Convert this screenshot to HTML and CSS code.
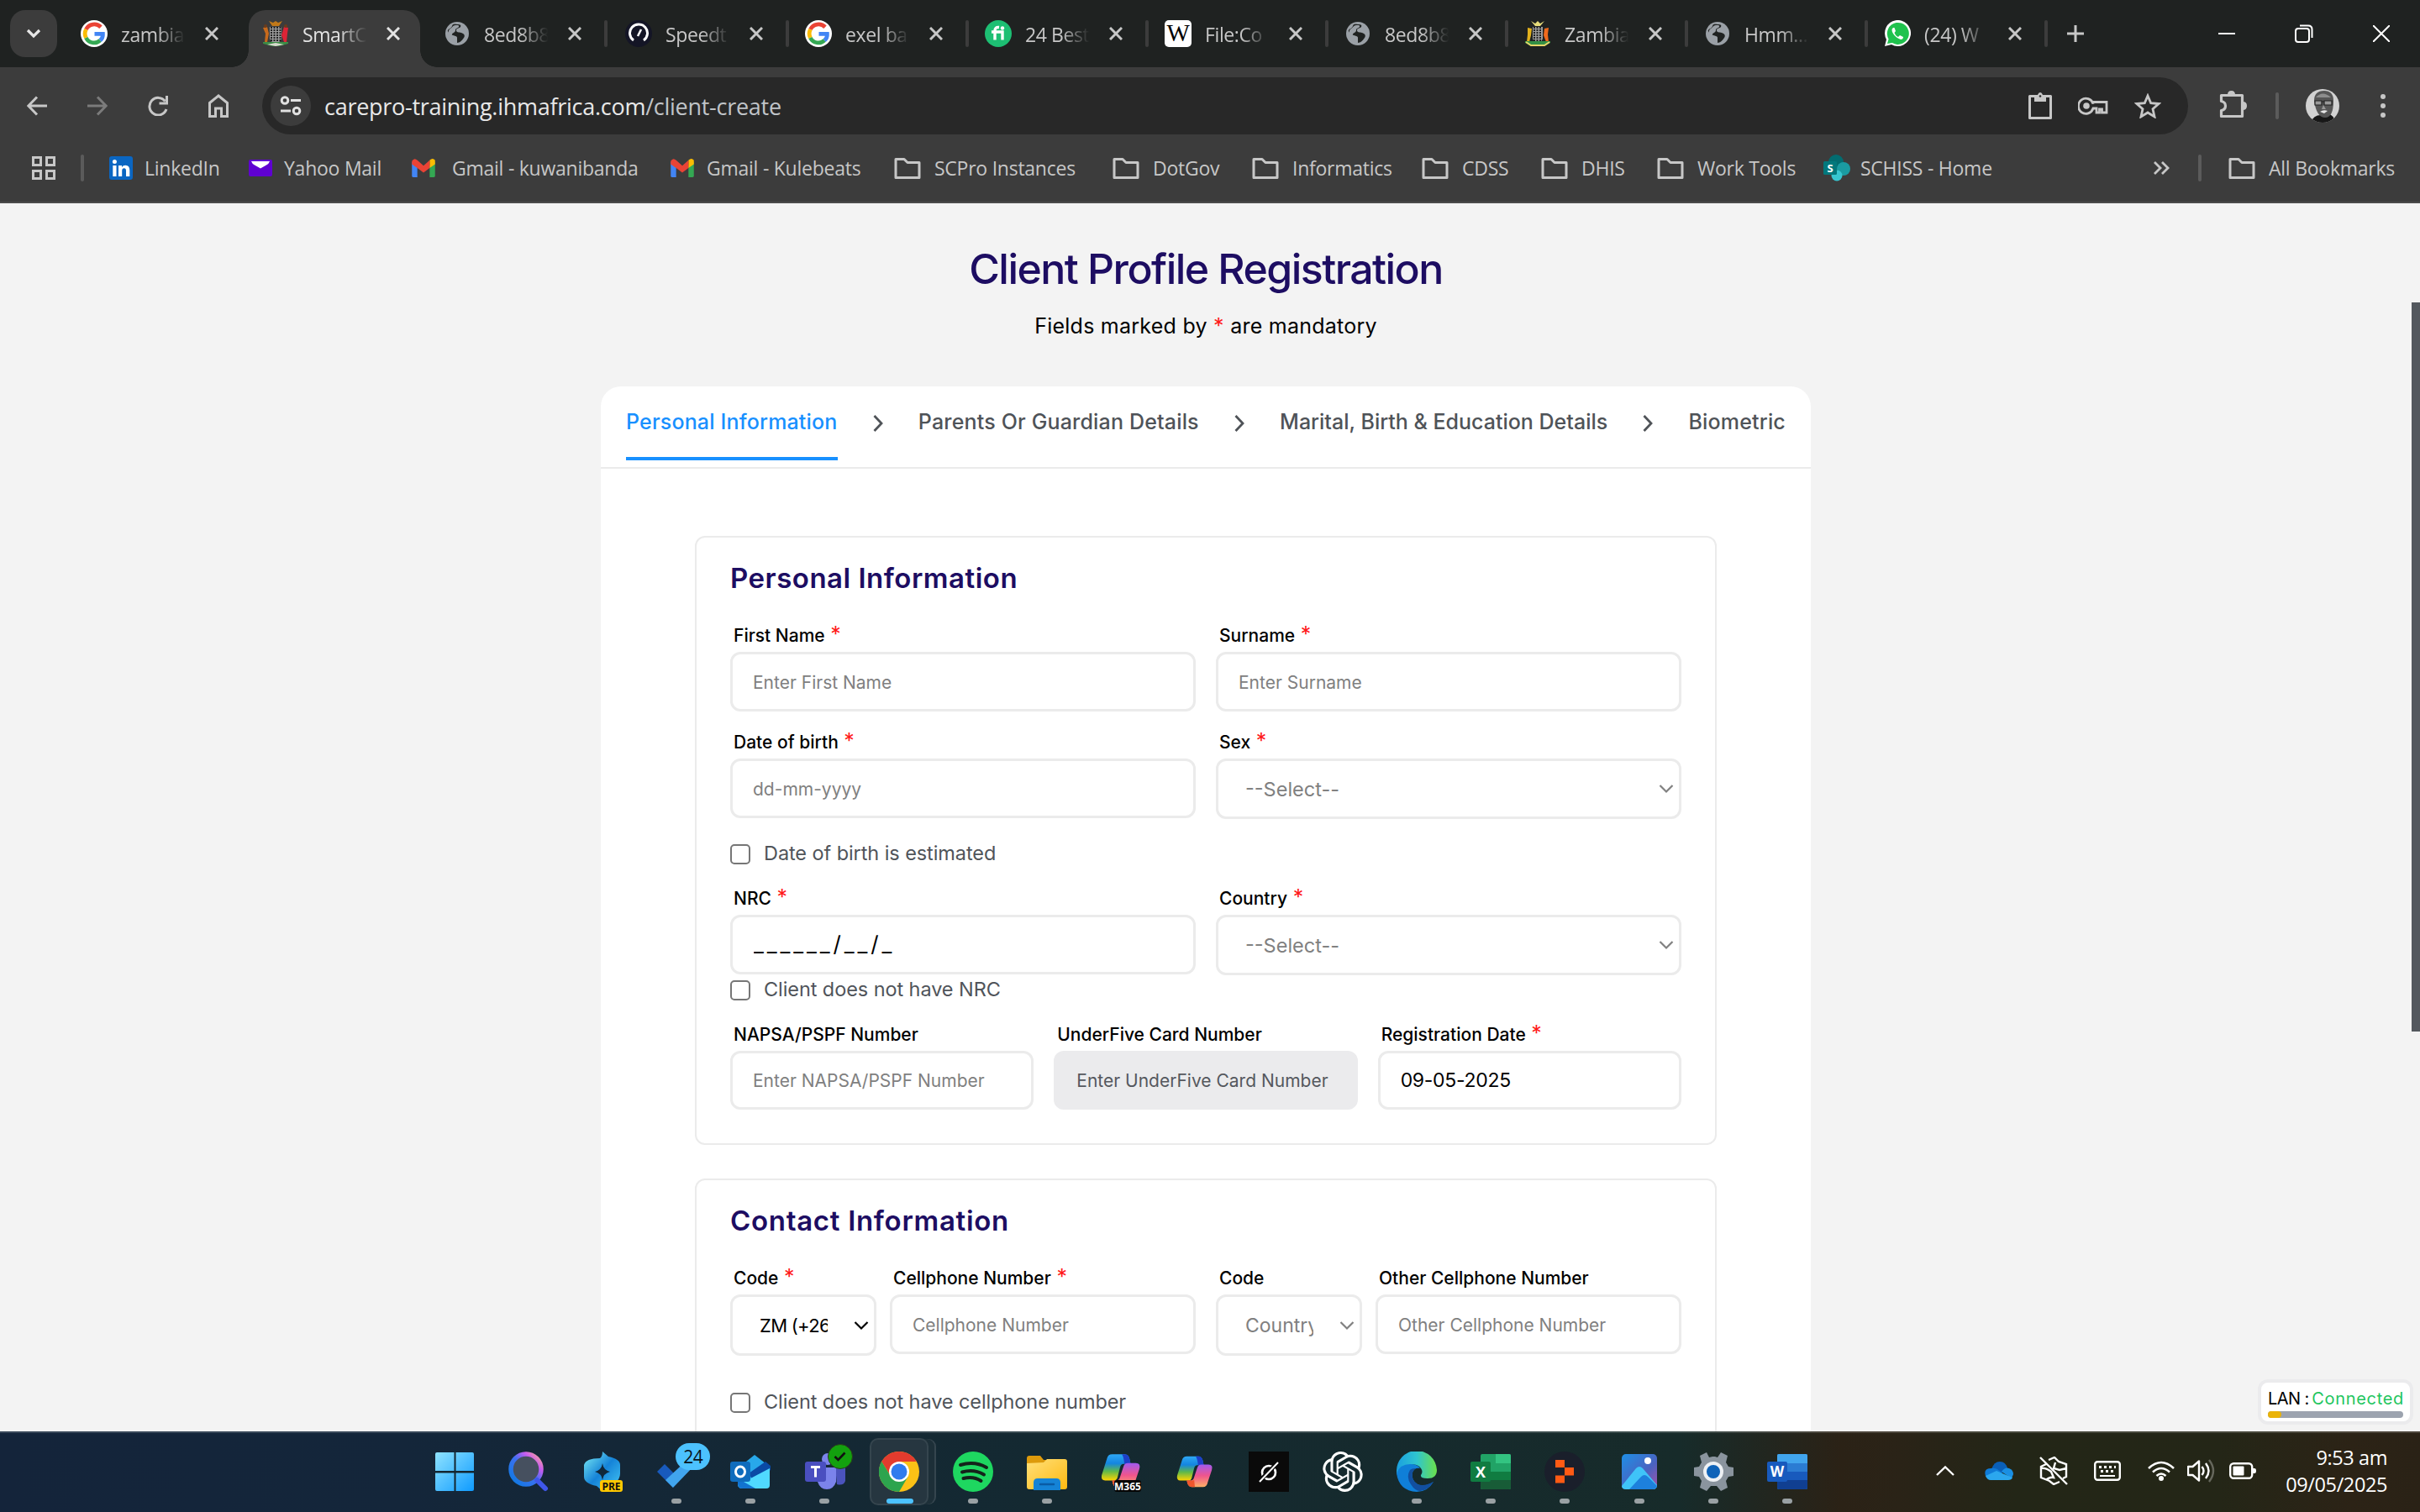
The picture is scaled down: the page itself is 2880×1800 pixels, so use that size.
FILE: index.html
```html
<!DOCTYPE html>
<html lang="en">
<head>
<meta charset="utf-8">
<title>SmartCare - Client Profile Registration</title>
<link rel="stylesheet" href="styles.css">
</head>
<body>
<svg class="defs" aria-hidden="true">
  <defs>
    <linearGradient id="gWin" x1="0" y1="0" x2="1" y2="1"><stop offset="0" stop-color="#8fe3ff"/><stop offset="1" stop-color="#0f9bff"/></linearGradient>
    <linearGradient id="gSearch" x1="0" y1="1" x2="1" y2="0"><stop offset="0" stop-color="#0a7be0"/><stop offset=".5" stop-color="#3d6ff0"/><stop offset=".75" stop-color="#c95cf0"/><stop offset="1" stop-color="#ffb08a"/></linearGradient>
    <linearGradient id="gPre" x1="0" y1="0" x2="1" y2="1"><stop offset="0" stop-color="#7ff0f5"/><stop offset=".5" stop-color="#1583d8"/><stop offset="1" stop-color="#45c8f5"/></linearGradient>
    <linearGradient id="gCopA" x1="0" y1="0" x2="0" y2="1"><stop offset="0" stop-color="#2ea8f5"/><stop offset=".35" stop-color="#1485e0"/><stop offset=".65" stop-color="#5fb84a"/><stop offset="1" stop-color="#ffd400"/></linearGradient>
    <linearGradient id="gCopB" x1="0" y1="0" x2="0" y2="1"><stop offset="0" stop-color="#a05af0"/><stop offset=".5" stop-color="#f0558c"/><stop offset="1" stop-color="#ffb066"/></linearGradient>
    <linearGradient id="gEdge" x1="0" y1="0" x2="1" y2="0"><stop offset="0" stop-color="#1a9fe0"/><stop offset=".5" stop-color="#2fc5cf"/><stop offset="1" stop-color="#6be04a"/></linearGradient>
    <linearGradient id="gPhoto" x1="0" y1="0" x2="1" y2="1"><stop offset="0" stop-color="#1e8fe6"/><stop offset=".6" stop-color="#4b62c0"/><stop offset="1" stop-color="#a552a8"/></linearGradient>
    <linearGradient id="gFold" x1="0" y1="0" x2="1" y2="1"><stop offset="0" stop-color="#ffe07a"/><stop offset="1" stop-color="#ffb911"/></linearGradient>

    <symbol id="close" viewBox="0 0 16 16"><path d="M1 1l14 14M15 1L1 15" fill="none" stroke="currentColor" stroke-width="3"/></symbol>
    <symbol id="google" viewBox="0 0 32 32"><circle cx="16" cy="16" r="16" fill="#fff"/><g fill="none" stroke-width="4.8"><path d="M24 8.2A11 11 0 0 0 6.4 11" stroke="#ea4335"/><path d="M6.4 11a11 11 0 0 0 0 10" stroke="#fbbc05"/><path d="M6.4 21a10.6 10.6 0 0 0 16.8 3" stroke="#34a853"/><path d="M23.2 24.2c2.4-2 3.4-4.6 3.2-7.8H16.5" stroke="#4285f4"/></g></symbol>
    <symbol id="arms" viewBox="0 0 32 32"><path d="M8 1l5 2 3-2 3 2 5-2-4 6h-8z" fill="#c07818"/><path d="M9 8h14v14q-2 5-7 6-5-1-7-6z" fill="#9a9a9a"/><path d="M11 8v18M14.500 8v20M18 8v20M21.500 8v17" stroke="#222" stroke-width="2" stroke-dasharray="2 1"/><path d="M1 9l5-1 2 8-2 10H3l1-10z" fill="#c76a1c"/><path d="M31 9l-5-1-3 10 3 8h3l1-10z" fill="#dc2436"/><circle cx="4" cy="7" r="2" fill="#6b3b1c"/><circle cx="28" cy="7" r="2" fill="#6b3b1c"/><path d="M1 26h30v2L20 31h-8L1 28z" fill="#3d8c46"/><path d="M6 29l10-2 10 2-10 2z" fill="#d7d9cc"/></symbol>
    <symbol id="arms2" viewBox="0 0 32 32"><path d="M8 1l5 3 3-3 3 3 5-3-5 6h-6z" fill="#e6dc7a"/><path d="M10 8h12v14q-2 5-6 6-4-1-6-6z" fill="#9a9a9a"/><path d="M12 8v18M15.500 8v20M19 8v20" stroke="#222" stroke-width="2" stroke-dasharray="2 1"/><path d="M4 9l5 1-1 8-2 8H3l1-9z" fill="#e2b11c"/><path d="M29 9l-5 1-1 8 3 8h3l-1-9z" fill="#f06a1c"/><path d="M1 25h30v2l-7 4H8l-7-4z" fill="#339045"/><path d="M2 26l6 4h16l6-4" fill="none" stroke="#e6d66a" stroke-width="2"/></symbol>
    <symbol id="globe" viewBox="0 0 32 32"><circle cx="16" cy="16" r="14" fill="#9aa0a6"/><path d="M16 5c4 0 5 1 4 3s-5 1-5 4 3 2 6 3 5 3 3 6-5 6-8 6v-6c0-3-5-2-7-4S4 14 5 12s4-2 5-5 3-2 6-2z" fill="#1f2221"/><path d="M14 6c3 0 5 0 4 2s-4 1-4 4-4 3-4 5-3 0-4-1 0-5 2-6 3-4 6-4z" fill="#9aa0a6"/></symbol>
    <symbol id="speed" viewBox="0 0 32 32"><circle cx="16" cy="16" r="16" fill="#141526"/><path d="M10 24a10.500 10.500 0 1 1 12 0" fill="none" stroke="#fff" stroke-width="3"/><path d="M15 19l4-8" stroke="#fff" stroke-width="2.500"/></symbol>
    <symbol id="fiverr" viewBox="0 0 32 32"><circle cx="16" cy="16" r="16" fill="#1dbf73"/><path d="M8 14h13v9.500M12 23.500V12.500q0-4.500 5-4" fill="none" stroke="#fff" stroke-width="3.400"/><circle cx="21" cy="9.500" r="2.200" fill="#fff"/></symbol>
    <symbol id="wiki" viewBox="0 0 32 32"><rect width="32" height="32" rx="5" fill="#fff"/><text x="16" y="25" class="i-serif" text-anchor="middle" font-size="29">W</text></symbol>
    <symbol id="whats" viewBox="0 0 32 32"><path d="M1 31l2-8A15.500 15.500 0 1 1 9 29z" fill="#fff"/><path d="M4 28l1.600-5.500A13 13 0 1 1 10 27z" fill="#1fc24d"/><path d="M11 9q-3 2 0 7t9 7q3 0 3-3l-4-2-2 2q-3-1-4.500-5l1.500-2-1.500-4z" fill="#fff"/></symbol>
    <symbol id="folder" viewBox="0 0 32 28"><path d="M2 3.500h10l4 4h14v18H2z" fill="none" stroke="#c7c7c7" stroke-width="3" stroke-linejoin="round"/></symbol>
    <symbol id="gmail" viewBox="0 0 30 24"><path d="M0 4v18q0 2 2 2h5V9z" fill="#4285f4"/><path d="M30 4v18q0 2-2 2h-5V9z" fill="#34a853"/><path d="M23 2q4-4 7 0v5l-7 5z" fill="#fbbc04"/><path d="M0 3q3-5 7-1l8 7 8-7v10l-8 6-8-6-7-5z" fill="#ea4335"/></symbol>
    <symbol id="chev" viewBox="0 0 12 22"><path d="M1.500 2l8.500 9-8.500 9" fill="none" stroke="#4f5358" stroke-width="2.800"/></symbol>
    <symbol id="down" viewBox="0 0 18 12"><path d="M1.500 2l7.500 7.500L16.500 2" fill="none" stroke="currentColor" stroke-width="2.200"/></symbol>
    <symbol id="copilot" viewBox="0 0 48 48"><path d="M14 5h14q5 0 6 6l1 5h-8q-3 0-4 4l-3 12q-1 3-4 3H6q-5 0-4-6L8 10q1-5 6-5z" fill="url(#gCopA)"/><path d="M25 5h4q4 0 5 6l1 5h-7q-1-9-3-11z" fill="#1d3fc8"/><path d="M34 43H20q-5 0-6-8h5q3 0 4-4l4-12q1-4 5-4h9q6 0 4 7l-5 15q-1 6-6 6z" fill="url(#gCopB)"/><path d="M14 35h7q2 0 2-2l1 10h-4q-5 0-6-8z" fill="#f0562c"/></symbol>
  </defs>
</svg>

<div class="screen">
  <header class="browser">
    <div class="tabstrip">
      <div class="tabsearch"><svg width="18" height="12" viewBox="0 0 18 12"><path d="M2 2l7 7 7-7" fill="none" stroke="#e6e6e6" stroke-width="3.200"/></svg></div>
      <div class="tab wide"><svg class="fav"><use href="#google"/></svg><span class="tt">zambia</span><svg class="x"><use href="#close"/></svg></div>
      <div class="tab wide active"><svg class="fav"><use href="#arms"/></svg><span class="tt">SmartC</span><svg class="x"><use href="#close"/></svg></div>
      <div class="tab wide"><svg class="fav"><use href="#globe"/></svg><span class="tt">8ed8b8</span><svg class="x"><use href="#close"/></svg><i></i></div>
      <div class="tab"><svg class="fav"><use href="#speed"/></svg><span class="tt">Speedt</span><svg class="x"><use href="#close"/></svg><i></i></div>
      <div class="tab"><svg class="fav"><use href="#google"/></svg><span class="tt">exel ba</span><svg class="x"><use href="#close"/></svg><i></i></div>
      <div class="tab"><svg class="fav"><use href="#fiverr"/></svg><span class="tt">24 Best</span><svg class="x"><use href="#close"/></svg><i></i></div>
      <div class="tab"><svg class="fav"><use href="#wiki"/></svg><span class="tt">File:Co</span><svg class="x"><use href="#close"/></svg><i></i></div>
      <div class="tab"><svg class="fav"><use href="#globe"/></svg><span class="tt">8ed8b8</span><svg class="x"><use href="#close"/></svg><i></i></div>
      <div class="tab"><svg class="fav"><use href="#arms2"/></svg><span class="tt">Zambia</span><svg class="x"><use href="#close"/></svg><i></i></div>
      <div class="tab"><svg class="fav"><use href="#globe"/></svg><span class="tt">Hmm...</span><svg class="x"><use href="#close"/></svg><i></i></div>
      <div class="tab"><svg class="fav"><use href="#whats"/></svg><span class="tt">(24) W</span><svg class="x"><use href="#close"/></svg><i></i></div>
      <svg class="plus" width="22" height="22" viewBox="0 0 22 22"><path d="M11 1v20M1 11h20" stroke="#c7c7c7" stroke-width="3"/></svg>
      <div class="wincontrols">
        <svg width="20" height="20" viewBox="0 0 20 20"><path d="M0 10h20" stroke="#fff" stroke-width="2"/></svg>
        <svg width="22" height="22" viewBox="0 0 22 22"><rect x="1" y="5" width="16" height="16" rx="3" fill="none" stroke="#fff" stroke-width="2"/><path d="M6 1.500h10q4.500 0 4.500 4.500v10" fill="none" stroke="#fff" stroke-width="2"/></svg>
        <svg width="20" height="20" viewBox="0 0 20 20"><path d="M0 0l20 20M20 0L0 20" stroke="#fff" stroke-width="2"/></svg>
      </div>
    </div>

    <div class="toolbar">
      <div class="nav">
        <svg viewBox="0 0 24 24"><path d="M24 12H2M12 1.500L1.800 12 12 22.500" fill="none" stroke="#c7c7c7" stroke-width="3"/></svg>
        <svg viewBox="0 0 24 24"><path d="M0 12h22M12 1.500L22.200 12 12 22.500" fill="none" stroke="#7b7b7b" stroke-width="3"/></svg>
        <svg viewBox="0 0 24 24"><path d="M22 16a10.300 10.300 0 1 1-1.500-9.500M22.500 0v9h-9" fill="none" stroke="#c7c7c7" stroke-width="3"/></svg>
        <svg viewBox="0 0 24 28"><path d="M1.500 10.500L12 2l10.500 8.500v16h-7V17h-7v9.500h-7z" fill="none" stroke="#c7c7c7" stroke-width="3"/></svg>
      </div>
      <div class="omnibox">
        <span class="siteinfo"><svg width="26" height="24" viewBox="0 0 26 24"><g fill="none" stroke="#e0e0e0" stroke-width="3"><circle cx="6" cy="5.500" r="3.800"/><path d="M13 5.500h12M1 18h12"/><circle cx="20" cy="18" r="3.800"/></g></svg></span>
        <span class="url">carepro-training.ihmafrica.com<em>/client-create</em></span>
        <span class="omniicons">
          <svg width="28" height="32" viewBox="0 0 28 32"><path d="M1.500 4.500h25v26h-25z" fill="none" stroke="#c7c7c7" stroke-width="3" stroke-linejoin="round"/><path d="M7 3h4q1-3 3-3t3 3h4v8H7z" fill="#c7c7c7"/><circle cx="14" cy="4.500" r="1.300" fill="#282828"/></svg>
          <svg width="36" height="22" viewBox="0 0 36 22"><path d="M18 8.500A9 9 0 1 0 18 14h4v5h3.500v-4h3v4H34V6.500H18z" fill="none" stroke="#c7c7c7" stroke-width="2.800"/><circle cx="10" cy="11" r="3.800" fill="#c7c7c7"/></svg>
          <svg width="32" height="30" viewBox="0 0 32 30"><path d="M16 3l3.700 8.700 9.300.8-7 6.200 2 9.200-8-4.900-8 4.900 2-9.200-7-6.200 9.300-.8z" fill="none" stroke="#c7c7c7" stroke-width="2.800"/></svg>
        </span>
      </div>
      <svg class="puzzle" width="34" height="34" viewBox="0 0 34 34"><path d="M2.500 6.500h25v25h-25v-7q5-1 5-5.500t-5-5.500z" fill="none" stroke="#c7c7c7" stroke-width="3.200" stroke-linejoin="round"/><path d="M10 6q0-5 4.500-5T19 6zM28 14q5 0 5 5t-5 5z" fill="#c7c7c7"/></svg>
      <i class="vsep"></i>
      <svg class="avatar" width="40" height="40" viewBox="0 0 40 40"><clipPath id="av"><circle cx="20" cy="20" r="20"/></clipPath><g clip-path="url(#av)"><rect width="40" height="40" fill="#d2d2d2"/><path d="M6 40q3-9 12-9l8-2q8 2 9 11z" fill="#171717"/><path d="M10 14q0-12 12-12 11 0 11 12 0 20-10 20-10 0-13-20z" fill="#565656"/><path d="M12 10q8-9 18 0" fill="#8d8d8d"/><path d="M11 14h8v5h-8zM22 14h9v5h-9zM19 15h3" fill="#999" stroke="#222" stroke-width="1.200"/><path d="M21 19l-2 5h5z" fill="#999"/><path d="M17 27q4-3 9-1l-4 3z" fill="#e8e8e8"/></g></svg>
      <svg class="kebab" width="8" height="28" viewBox="0 0 8 28" fill="#c7c7c7"><circle cx="4" cy="3" r="3"/><circle cx="4" cy="14" r="3"/><circle cx="4" cy="25" r="3"/></svg>
    </div>

    <div class="bookmarks">
      <svg width="28" height="28" viewBox="0 0 28 28"><g fill="none" stroke="#c7c7c7" stroke-width="3"><path d="M1.500 1.500h9v9h-9zM17.500 1.500h9v9h-9zM1.500 17.500h9v9h-9zM17.500 17.500h9v9h-9z"/></g></svg>
      <i class="vsep"></i>
      <a class="bm site"><svg width="28" height="28" viewBox="0 0 28 28"><rect width="28" height="28" rx="3" fill="#0a66c2"/><path d="M4.300 11h4.200v13H4.300zM11 11h4v2q1.400-2.300 4.300-2.300 5 0 5 6V24H20v-6.500q0-3.200-2.300-3.200-2.500 0-2.500 3.200V24H11z" fill="#fff"/><circle cx="6.400" cy="6.500" r="2.500" fill="#fff"/></svg>LinkedIn</a>
      <a class="bm site"><svg width="28" height="20" viewBox="0 0 28 20"><rect width="28" height="20" rx="2" fill="#5f01d1"/><path d="M3 2h22q-1 3-4 4.500l-7 4-7-4Q4 5 3 2z" fill="#fff"/></svg>Yahoo Mail</a>
      <a class="bm mail"><svg width="30" height="22"><use href="#gmail"/></svg>Gmail - kuwanibanda</a>
      <a class="bm site"><svg width="30" height="22"><use href="#gmail"/></svg>Gmail - Kulebeats</a>
      <a class="bm"><svg width="32" height="28"><use href="#folder"/></svg>SCPro Instances</a>
      <a class="bm"><svg width="32" height="28"><use href="#folder"/></svg>DotGov</a>
      <a class="bm"><svg width="32" height="28"><use href="#folder"/></svg>Informatics</a>
      <a class="bm"><svg width="32" height="28"><use href="#folder"/></svg>CDSS</a>
      <a class="bm"><svg width="32" height="28"><use href="#folder"/></svg>DHIS</a>
      <a class="bm"><svg width="32" height="28"><use href="#folder"/></svg>Work Tools</a>
      <a class="bm share"><svg width="32" height="32" viewBox="0 0 32 32"><circle cx="15" cy="9" r="9" fill="#036c70"/><circle cx="24" cy="17" r="8" fill="#1a9ba1"/><circle cx="16" cy="25" r="6.500" fill="#37c6d0"/><rect y="8" width="16" height="16" rx="1.500" fill="#03787c"/><text x="8" y="21" text-anchor="middle" font-size="13" font-weight="700" fill="#fff">S</text></svg>SCHISS - Home</a>
      <svg width="20" height="16" viewBox="0 0 20 16"><path d="M2 1l7 7-7 7M11 1l7 7-7 7" fill="none" stroke="#c7c7c7" stroke-width="2.800"/></svg>
      <i class="vsep"></i>
      <a class="bm"><svg width="32" height="28"><use href="#folder"/></svg>All Bookmarks</a>
    </div>
  </header>

  <main class="page">
    <div class="content">
      <h1>Client Profile Registration</h1>
      <p class="sub">Fields marked by <b>*</b> are mandatory</p>
      <section class="card">
        <nav class="steps">
          <a class="current">Personal Information</a><svg width="12" height="22"><use href="#chev"/></svg>
          <a>Parents Or Guardian Details</a><svg width="12" height="22"><use href="#chev"/></svg>
          <a class="long">Marital, Birth &amp; Education Details</a><svg width="12" height="22"><use href="#chev"/></svg>
          <a>Biometric</a>
        </nav>

        <div class="panel">
          <h2>Personal Information</h2>
          <div class="row r1">
            <div><label>First Name <b>*</b></label><input placeholder="Enter First Name"></div>
            <div><label>Surname <b>*</b></label><input placeholder="Enter Surname"></div>
          </div>
          <div class="row r2">
            <div><label>Date of birth <b>*</b></label><input placeholder="dd-mm-yyyy"></div>
            <div><label>Sex <b>*</b></label><div class="select"><span>--Select--</span><svg width="18" height="12"><use href="#down"/></svg></div></div>
          </div>
          <div class="check"><input type="checkbox"><span>Date of birth is estimated</span></div>
          <div class="row r3">
            <div><label>NRC <b>*</b></label><input class="nrc" value="______/__/_"></div>
            <div><label>Country <b>*</b></label><div class="select"><span>--Select--</span><svg width="18" height="12"><use href="#down"/></svg></div></div>
          </div>
          <div class="check"><input type="checkbox"><span>Client does not have NRC</span></div>
          <div class="row three">
            <div><label>NAPSA/PSPF Number</label><input placeholder="Enter NAPSA/PSPF Number"></div>
            <div><label>UnderFive Card Number</label><input class="off" placeholder="Enter UnderFive Card Number" disabled></div>
            <div><label>Registration Date <b>*</b></label><input class="date" value="09-05-2025"></div>
          </div>
        </div>

        <div class="panel second">
          <h2>Contact Information</h2>
          <div class="row phones">
            <div><label>Code <b>*</b></label><div class="select dark"><span>ZM (+26</span><svg width="18" height="12"><use href="#down"/></svg></div></div>
            <div><label>Cellphone Number <b>*</b></label><input placeholder="Cellphone Number"></div>
            <div><label>Code</label><div class="select"><span>Country</span><svg width="18" height="12"><use href="#down"/></svg></div></div>
            <div><label>Other Cellphone Number</label><input placeholder="Other Cellphone Number"></div>
          </div>
          <div class="check"><input type="checkbox"><span>Client does not have cellphone number</span></div>
        </div>
      </section>
    </div>
    <div class="scroll"><i></i></div>
    <div class="lan"><p>LAN : <span>Connected</span></p><div class="meter"><i></i></div></div>
  </main>

  <footer class="taskbar">
    <div class="apps">
      <div class="app"><svg viewBox="0 0 48 48"><path d="M3 1h21v22H1V3q0-2 2-2zM25 1h20q2 0 2 2v20H25zM1 25h23v22H3q-2 0-2-2zM25 25h22v20q0 2-2 2H25z" fill="url(#gWin)"/><path d="M24.500 0v48M0 24.500h48" stroke="#14262f" stroke-width="2"/></svg></div>
      <div class="app"><svg viewBox="0 0 48 48"><circle cx="21" cy="21" r="18" fill="#46505f" stroke="url(#gSearch)" stroke-width="5.500"/><path d="M34 34l10 10" stroke="#3f57ea" stroke-width="6" stroke-linecap="round"/></svg></div>
      <div class="app"><svg viewBox="0 0 48 48"><path d="M24 0l7 6q14 3 14 10v10q0 12-21 21l-7-6Q2 38 2 30V16Q4 8 21 8q3-2 3-8z" fill="url(#gPre)"/><path d="M24 14q1 8 9 10-8 2-9 10-1-8-9-10 8-2 9-10z" fill="#10283a"/><rect x="21" y="34" width="27" height="14" rx="3" fill="#ffc800"/><text x="34.500" y="45.500" text-anchor="middle" font-size="12" font-weight="700" fill="#111">PRE</text></svg></div>
      <div class="app run"><svg viewBox="0 0 48 48"><path d="M1 24l9-9 11 11-1 17z" fill="#185abd"/><path d="M11 34l28-26 6 9-25 26z" fill="#41a5ee"/></svg><span class="badge blue">24</span><i></i></div>
      <div class="app run"><svg viewBox="0 0 48 48"><path d="M9 20L29 4l18 14v8L13 40H9z" fill="#28a8ea"/><path d="M22 26L42 12l6 5v5L28 36z" fill="#0a4aa5"/><path d="M47 20v20q0 4-4 4H14q-4 0-5-4z" fill="#50d9ff"/><path d="M9 32l21 12H14q-5 0-5-6z" fill="#1273d0"/><rect y="12" width="24" height="24" rx="3" fill="#0f6cbd"/><ellipse cx="12" cy="24" rx="5.500" ry="6" fill="none" stroke="#fff" stroke-width="3"/></svg><i></i></div>
      <div class="app run"><svg viewBox="0 0 48 48"><circle cx="27" cy="9" r="7" fill="#7b83eb"/><path d="M36 19h12v16q-2 6-10 4z" fill="#4b53bc"/><path d="M15 19h22v17q-3 9-11 9t-11-9z" fill="#7b83eb"/><rect y="12" width="25" height="24" rx="3" fill="#4a4fc0"/><path d="M7 18.500h11M12.500 18.500v12" stroke="#fff" stroke-width="3"/></svg><span class="badge green"><svg width="16" height="12" viewBox="0 0 16 12"><path d="M1.500 6l4 4 8-8.500" fill="none" stroke="#111" stroke-width="2.600"/></svg></span><i></i></div>
      <div class="app run front"><span class="stack"><svg viewBox="0 0 48 48"><circle cx="24" cy="24" r="24" fill="#fbc116"/><path d="M3.200 12A24 24 0 0 1 44.800 12H24L14 29z" fill="#e33b2e"/><path d="M3.200 12A24 24 0 0 0 24 48l10.500-18-20 0z" fill="#2da44e"/><circle cx="24" cy="24" r="12" fill="#fff"/><circle cx="24" cy="24" r="9.500" fill="#2f7bee"/></svg></span><i></i></div>
      <div class="app run"><svg viewBox="0 0 48 48"><circle cx="24" cy="24" r="24" fill="#1ed760"/><path d="M9 16q17-5 31 3M11 24.500q14-4 26 3M12.500 32q12-3 21 3" fill="none" stroke="#14231a" stroke-width="4" stroke-linecap="round"/></svg><i></i></div>
      <div class="app run"><svg viewBox="0 0 48 48"><path d="M0 8q0-3 3-3h13l4 5h25v10H0z" fill="#dd9a0c"/><path d="M0 14l20-1 4-4h21q3 0 3 3v30q0 3-3 3H3q-3 0-3-3z" fill="url(#gFold)"/><path d="M8 46V37q0-5 5-5h22q5 0 5 5v9z" fill="#1583d6"/><path d="M16 39h16" stroke="#0a5ba5" stroke-width="2.500" stroke-linecap="round"/></svg><i></i></div>
      <div class="app"><svg viewBox="0 0 48 48"><use href="#copilot" x="-1" y="-2" width="50" height="50"/><rect x="16" y="34" width="32" height="14" rx="3" fill="#050505"/><text x="32" y="45.500" text-anchor="middle" font-size="12" font-weight="700" fill="#fff">M365</text></svg></div>
      <div class="app"><svg viewBox="0 0 48 48"><use href="#copilot" x="1" y="1" width="46" height="46"/></svg></div>
      <div class="app"><svg viewBox="0 0 48 48"><rect width="48" height="48" fill="#0a0a0a"/><circle cx="24" cy="25" r="8" fill="none" stroke="#fff" stroke-width="2.600"/><path d="M13 35L35 13" stroke="#0a0a0a" stroke-width="5"/><path d="M13 36L35 13" stroke="#fff" stroke-width="2"/></svg></div>
      <div class="app"><svg viewBox="0 0 24 24"><path fill="#fff" d="M22.2819 9.8211a5.9847 5.9847 0 0 0-.5157-4.9108 6.0462 6.0462 0 0 0-6.5098-2.9A6.0651 6.0651 0 0 0 4.9807 4.1818a5.9847 5.9847 0 0 0-3.9977 2.9 6.0462 6.0462 0 0 0 .7427 7.0966 5.98 5.98 0 0 0 .511 4.9107 6.051 6.051 0 0 0 6.5146 2.9001A5.9847 5.9847 0 0 0 13.2599 24a6.0557 6.0557 0 0 0 5.7718-4.2058 5.9894 5.9894 0 0 0 3.9977-2.9001 6.0557 6.0557 0 0 0-.7475-7.0729zm-9.022 12.6081a4.4755 4.4755 0 0 1-2.8764-1.0408l.1419-.0804 4.7783-2.7582a.7948.7948 0 0 0 .3927-.6813v-6.7369l2.02 1.1686a.071.071 0 0 1 .038.052v5.5826a4.504 4.504 0 0 1-4.4945 4.4944zm-9.6607-4.1254a4.4708 4.4708 0 0 1-.5346-3.0137l.142.0852 4.783 2.7582a.7712.7712 0 0 0 .7806 0l5.8428-3.3685v2.3324a.0804.0804 0 0 1-.0332.0615L9.74 19.9502a4.4992 4.4992 0 0 1-6.1408-1.6464zM2.3408 7.8956a4.485 4.485 0 0 1 2.3655-1.9728V11.6a.7664.7664 0 0 0 .3879.6765l5.8144 3.3543-2.0201 1.1685a.0757.0757 0 0 1-.071 0l-4.8303-2.7865A4.504 4.504 0 0 1 2.3408 7.872zm16.5963 3.8558L13.1038 8.364 15.1192 7.2a.0757.0757 0 0 1 .071 0l4.8303 2.7913a4.4944 4.4944 0 0 1-.6765 8.1042v-5.6772a.79.79 0 0 0-.407-.667zm2.0107-3.0231l-.142-.0852-4.7735-2.7818a.7759.7759 0 0 0-.7854 0L9.409 9.2297V6.8974a.0662.0662 0 0 1 .0284-.0615l4.8303-2.7866a4.4992 4.4992 0 0 1 6.6802 4.66zM8.3065 12.863l-2.02-1.1638a.0804.0804 0 0 1-.038-.0567V6.0742a4.4992 4.4992 0 0 1 7.3757-3.4537l-.142.0805L8.704 5.459a.7948.7948 0 0 0-.3927.6813zm1.0976-2.3654l2.602-1.4998 2.6069 1.4998v2.9994l-2.5974 1.4997-2.6067-1.4997Z"/></svg></div>
      <div class="app run"><svg viewBox="0 0 48 48"><path d="M0 24A24 24 0 0 1 48 22q0 10-11 10-9 0-8-4 3-4 0-8-4-6-13-4Q3 18 0 28z" fill="url(#gEdge)"/><path d="M0 26Q4 15 16 15q9 0 12 5-7-1-9 5-2 9 6 14 8 4 19-3Q37 48 24 48 3 47 0 26z" fill="#0f7fd8"/><path d="M16 22q-5 8 1 17 5 8 11 8 10-1 16-11-11 6-19 3-8-5-6-14 1-3 4-5-5 0-7 2z" fill="#124f9f"/></svg><i></i></div>
      <div class="app run"><svg viewBox="0 0 48 48"><rect x="12" y="3" width="36" height="42" rx="2" fill="#21a366"/><path d="M30 3h16q2 0 2 2v9H30z" fill="#33c481"/><path d="M12 24h36v10H12z" fill="#107c41"/><path d="M12 34h36v9q0 2-2 2H14q-2 0-2-2z" fill="#185c37"/><rect y="12" width="24" height="24" rx="2" fill="#107c41"/><text x="12" y="30.500" text-anchor="middle" font-size="18" font-weight="700" fill="#fff">X</text></svg><i></i></div>
      <div class="app run"><svg viewBox="0 0 48 48"><circle cx="24" cy="24" r="24" fill="#1a1f2b"/><path d="M13 10h11v9H13zM24 19h11v9.500H24zM13 28.500h11v9H13z" fill="#ff5a14"/></svg><i></i></div>
      <div class="app run"><svg viewBox="0 0 48 48"><rect x="3" y="3" width="42" height="42" rx="5" fill="url(#gPhoto)"/><circle cx="34" cy="11" r="4" fill="#fff"/><path d="M3 41l17-21q4-4 8 0l17 20q0 5-5 5H8q-5 0-5-4z" fill="#3fc4f8"/><path d="M12 45l14-15q4-4 8 0l11 11q-1 4-5 4z" fill="#1d80dc"/></svg><i></i></div>
      <div class="app run"><svg viewBox="0 0 48 48"><path d="M19 7l4-1 3 0 3 1 4-6 8 4-2 8 3 5 6 1v10l-6 1-3 5 2 8-8 4-5-6h-7l-5 6-8-4 2-8-3-5-6-1V19l6-1 3-5-2-8 8-4z" fill="#8a949e"/><circle cx="24" cy="24" r="12" fill="#eef1f4"/><circle cx="24" cy="24" r="8" fill="#0f63b8"/></svg><i></i></div>
      <div class="app run"><svg viewBox="0 0 48 48"><rect x="12" y="3" width="36" height="42" rx="2" fill="#2b7cd3"/><path d="M12 13V5q0-2 2-2h32q2 0 2 2v9H12z" fill="#41a5ee"/><path d="M12 24h36v10H12z" fill="#185abd"/><path d="M12 34h36v9q0 2-2 2H14q-2 0-2-2z" fill="#103f91"/><rect y="12" width="24" height="24" rx="2" fill="#185abd"/><text x="12" y="30" text-anchor="middle" font-size="17" font-weight="700" fill="#fff">W</text></svg><i></i></div>
    </div>
    <div class="tray">
      <svg width="22" height="12" viewBox="0 0 22 12"><path d="M1 11L11 1.500 21 11" fill="none" stroke="#fff" stroke-width="2.400"/></svg>
      <svg width="34" height="22" viewBox="0 0 34 22"><path d="M8 9q3-9 10-9t9 8l-9 8z" fill="#0a5fb8"/><path d="M1 17q-3-9 7-9 5-1 10 3l8 10H7q-4 0-6-4z" fill="#0f7ad6"/><path d="M20 12q4-6 9-4 5 2 5 7l-2 5z" fill="#1a8fe3"/><path d="M1 17l13-6 19 8q-1 3-5 3H7q-4 0-6-5z" fill="#2ba7ee"/></svg>
      <svg width="34" height="34" viewBox="0 0 34 34"><g fill="none" stroke="#fff" stroke-width="2.400"><path d="M11 4l7-3 5 5 9 3v15l-4 2M24 30l-7 3-5-4-10-4V12l6-3M2 14q6-1 12 4l3 7q-5-1-9 3M32 14l-8 2-7-2 2-7M1 1l32 32"/></g></svg>
      <svg width="32" height="24" viewBox="0 0 32 24"><rect x="1.200" y="1.200" width="29.600" height="21.600" rx="3" fill="none" stroke="#fff" stroke-width="2.400"/><path d="M6 7.500h20M8 12.500h16" stroke="#fff" stroke-width="3" stroke-dasharray="3 3"/><path d="M7 18h18" stroke="#fff" stroke-width="2"/></svg>
      <svg width="32" height="24" viewBox="0 0 32 24"><g fill="none" stroke="#fff" stroke-width="2.600"><path d="M1 9Q16-5 31 9M6 13.500q10-9 20 0M10.500 18q5.500-5 11 0"/></g><circle cx="16" cy="21" r="3" fill="#fff"/></svg>
      <svg width="34" height="28" viewBox="0 0 34 28"><path d="M1 9h5.500L14 2.500v23L6.500 19H1z" fill="none" stroke="#fff" stroke-width="2.400" stroke-linejoin="round"/><path d="M17.500 9q4 5 0 10M22 5q7 9 0 18" fill="none" stroke="#fff" stroke-width="2.400"/><path d="M26 1q10 13 0 26" fill="none" stroke="#66675c" stroke-width="2.400"/></svg>
      <svg width="32" height="20" viewBox="0 0 32 20"><rect x="1.200" y="1.200" width="26" height="17.600" rx="4" fill="none" stroke="#fff" stroke-width="2.400"/><rect x="4.500" y="4.500" width="13" height="11" rx="1" fill="#fff"/><path d="M28 7h2q2 0 2 3t-2 3h-2z" fill="#fff"/></svg>
      <div class="clock"><span>9:53 am</span><span>09/05/2025</span></div>
    </div>
  </footer>
</div>
</body>
</html>
```
FILE: styles.css
```css
* { box-sizing: border-box; }
body { margin: 0; }
svg { display: block; flex: none; }
.defs { position: absolute; width: 0; height: 0; }
.i-serif { font-family: "Liberation Serif", serif; }

.screen {
  width: 2880px; height: 1800px; overflow: hidden;
  display: grid; grid-template-rows: 242px 1462px 96px;
  font-family: "Open Sans", sans-serif;
}

/* browser chrome */
.browser {
  background: #3c3c3c; border-bottom: 2px solid #4a4a4a; color: #c7c7c7;
  display: grid; grid-template-rows: 80px 92px 68px;
}
.tabstrip { display: flex; align-items: center; background: #1f2221; padding-left: 12px; }
.tabsearch {
  width: 56px; height: 56px; border-radius: 18px; background: #3c3c3c;
  display: flex; align-items: center; justify-content: center; margin-right: 12px;
}
.tab {
  width: 214px; height: 80px; position: relative; color: #c7c7c7;
  display: grid; grid-template-columns: 32px 76px 16px 4px; align-items: center;
  padding-left: 16px; font-size: 23px; letter-spacing: -.4px;
}
.tab.wide { width: 216px; }
.tab .fav { width: 32px; height: 32px; }
.tab .tt {
  margin-left: 16px; width: 78px; white-space: nowrap; padding-top: 1px;
  -webkit-mask-image: linear-gradient(90deg, #000 55%, transparent 98%);
  mask-image: linear-gradient(90deg, #000 55%, transparent 98%);
}
.tab .x { width: 16px; height: 16px; margin-left: 40px; }
.tab i { width: 4px; height: 32px; border-radius: 2px; background: #3c3c3c; margin-left: 67px; }
.tab.active { color: #e3e3e3; }
.tab.active::before {
  content: ""; position: absolute; z-index: 0; left: 0; top: 12px; width: 204px; height: 68px;
  background: #3c3c3c; border-radius: 20px 20px 0 0;
}
.tab.active::after {
  content: ""; position: absolute; left: -20px; bottom: 0; width: 244px; height: 20px;
  background:
    radial-gradient(circle at 0 0, transparent 19.500px, #3c3c3c 20px) left / 20px 20px no-repeat,
    radial-gradient(circle at 100% 0, transparent 19.500px, #3c3c3c 20px) right / 20px 20px no-repeat;
}
.tab.active > * { position: relative; z-index: 1; }
.plus { margin-left: 19px; }
.wincontrols { margin-left: auto; display: flex; align-items: center; gap: 71px; padding-right: 36px; }

.toolbar { display: flex; align-items: center; background: #3c3c3c; }
.nav { display: flex; align-items: center; gap: 48px; padding-left: 32px; }
.nav svg { width: 24px; height: 24px; }
.nav svg:last-child { height: 28px; }
.omnibox {
  width: 2292px; height: 68px; border-radius: 34px; background: #282828;
  margin-left: 40px; padding: 0 32px 0 10px; display: flex; align-items: center;
}
.siteinfo {
  width: 48px; height: 48px; border-radius: 50%; background: #3c3c3c;
  display: flex; align-items: center; justify-content: center;
}
.url { margin-left: 16px; font-size: 27px; letter-spacing: -.27px; color: #e8e8e8; }
.url em { font-style: normal; color: #c0c4c8; }
.omniicons { margin-left: auto; display: flex; align-items: center; gap: 31px; }
.puzzle { margin-left: 37px; margin-bottom: 4px; }
.vsep { display: block; width: 4px; height: 32px; border-radius: 2px; background: #5b5b5b; }
.toolbar .vsep { margin-left: 33px; }
.avatar { margin-left: 32px; }
.kebab { margin-left: 48px; }

.bookmarks {
  display: grid; align-items: center; padding: 0 0 12px 38px;
  grid-template-columns: 58px 34px 166px 193px 308px 267px 260px 166px 202px 142px 138px 198px 392px 54px 36px 210px;
  font-size: 23px; letter-spacing: -.25px;
}
.bm { display: flex; align-items: center; gap: 16px; white-space: nowrap; line-height: 30px; }
.bm.site { gap: 14px; }
.bm.mail { gap: 19px; }
.bm.share { gap: 12px; }

/* page */
.page { position: relative; display: flex; background: #f3f3f3; overflow: hidden; font-family: Inter, sans-serif; }
.content { width: 2870px; }
h1 {
  margin: 42px 0 0; text-align: center; font-size: 50px; line-height: 72px; font-weight: 500;
  letter-spacing: -1.550px; color: #1d0d62;
}
.sub { margin: 14px 0 54px; text-align: center; font-size: 25px; line-height: 36px; letter-spacing: .25px; color: #000; }
.sub b, label b { color: #ff1a1a; font-weight: 400; }
.card { width: 1440px; margin: 0 auto; height: 1300px; background: #fff; border-radius: 24px 24px 0 0; }
.steps {
  height: 98px; border-bottom: 2px solid #ebebeb; padding: 0 30px;
  display: flex; align-items: flex-start; justify-content: space-between;
  font-size: 25px; font-weight: 500; letter-spacing: .17px; color: #4f5358; white-space: nowrap;
}
.steps a { height: 88px; line-height: 84px; }
.steps .long { letter-spacing: 0; }
.steps .current { color: #1890ff; border-bottom: 4px solid #1890ff; }
.steps svg { margin-top: 33px; }
.panel {
  width: 1216px; margin: 80px auto 0; padding: 28px 40px 40px;
  border: 2px solid #ebebeb; border-radius: 12px;
}
.panel.second { margin-top: 40px; }
h2 { margin: 0 0 28px; font-size: 33px; line-height: 40px; font-weight: 600; letter-spacing: .5px; color: #1d0d62; }
.second h2 { letter-spacing: .7px; }
.row { display: grid; grid-template-columns: 554px 554px; gap: 24px; }
.row.three { grid-template-columns: 1fr 1fr 1fr; }
.row.phones { grid-template-columns: 174px 364px 174px 364px; gap: 16px; height: 153px; }
.phones > :nth-child(3) { margin-left: 8px; margin-right: -8px; }
.phones > :nth-child(4) { margin-left: 8px; margin-right: -8px; }
.r1 { height: 127px; }
.r2 { height: 138px; }
.r3 { height: 114px; }
label { display: block; height: 40px; line-height: 42px; padding-left: 4px; font-size: 21px; font-weight: 500; color: #000; }
label b { font-size: 25px; line-height: 1; margin-left: 1px; }
.row input, .select {
  width: 100%; height: 71px; border: 3px solid #ebebeb; border-radius: 12px; background: #fff;
  padding: 1px 24px 0; font: 400 21px Inter, sans-serif; color: #000; display: block;
}
.row input::placeholder { color: #808080; opacity: 1; }
.row.three input { height: 70px; padding-top: 0; }
.row input.off { background: #ebebed; border-color: #ebebed; }
.row input.off::placeholder { color: #55585e; }
.row.three input.date { font-size: 23px; letter-spacing: -.3px; }
.row input.nrc { font-size: 26px; letter-spacing: 3.900px; padding: 0 24px 2px 25px; }
.select {
  height: 72px; padding: 0 6px 0 32px; font-size: 23.500px; color: #808080;
  display: flex; align-items: center; justify-content: space-between;
}
.phones .select { height: 73px; }
.select span { overflow: hidden; white-space: nowrap; }
.phones .select span { width: 81px; font-size: 23px; }
.select.dark { color: #000; }
.phones .select.dark span { font-size: 22px; letter-spacing: -.7px; }
.check {
  display: flex; align-items: center; gap: 16px; height: 32px; margin-bottom: 16px;
  font-size: 23.500px; line-height: 32px; letter-spacing: -.08px; color: #50545a;
}
.check span { padding-bottom: 2px; }
.check input { appearance: none; margin: 0; width: 24px; height: 24px; border: 2px solid #767676; border-radius: 5px; background: #fff; }

.scroll { width: 10px; padding-top: 118px; }
.scroll i { display: block; height: 868px; background: #53585e; }
.lan {
  position: absolute; right: 8px; bottom: 8px; width: 185px; height: 54px;
  background: #fff; border: 4px solid #ebebed; border-radius: 12px; padding: 5px 8px 0;
}
.lan p { margin: 0; display: flex; justify-content: space-between; font-size: 20px; line-height: 28px; letter-spacing: -.6px; white-space: nowrap; color: #000; }
.lan span { color: #22c55e; letter-spacing: .7px; margin-right: -1px; }
.meter { height: 8px; border-radius: 4px; background: #9ca3af; margin-top: 1px; }
.meter i { display: block; width: 16px; height: 8px; border-radius: 4px; background: #eab308; }

/* taskbar */
.taskbar {
  border-top: 2px solid rgba(255, 255, 255, .16);
  background: linear-gradient(90deg, #14243a 0, #14263a 480px, #142931 1250px, #172b2a 2000px, #2b2216 2190px, #2a2317 2260px, #232617 2400px, #242617 2640px, #2c2316 2800px, #2a2216 2880px);
  background-origin: border-box;
  display: flex; justify-content: space-between;
}
.apps { display: flex; padding-left: 497px; }
.app { width: 88.100px; position: relative; display: flex; align-items: center; justify-content: center; padding-bottom: 2px; }
.app > svg, .stack svg { width: 48px; height: 48px; }
.app i { position: absolute; left: 38px; top: 78px; width: 12px; height: 6px; border-radius: 3px; background: #9aa1a4; }
.stack {
  width: 70px; height: 80px; border-radius: 10px; background: #263640; border: 2px solid #35454e;
  display: flex; align-items: center; justify-content: center;
  box-shadow: 8px 0 0 -1px #1d2f38, 10px 0 0 -1px #35454e;
}
.app.front i { left: 29px; width: 32px; background: #4cc2ff; }
.badge { position: absolute; display: flex; align-items: center; justify-content: center; color: #08131c; }
.badge.blue { left: 43px; top: 12px; width: 41px; height: 32px; border-radius: 16px; background: #4cc2ff; font-size: 21px; letter-spacing: -.5px; }
.badge.green { left: 48px; top: 13px; width: 30px; height: 30px; border-radius: 50%; background: #13a10e; border: 1px solid #2b3a1c; }
.tray { display: flex; align-items: center; padding: 0 39px 4px 0; }
.tray > svg:nth-child(2) { margin-left: 36px; }
.tray > svg:nth-child(3) { margin-left: 31px; }
.tray > svg:nth-child(4) { margin-left: 31px; }
.tray > svg:nth-child(5) { margin-left: 32px; }
.tray > svg:nth-child(6) { margin-left: 15px; }
.tray > svg:nth-child(7) { margin-left: 16px; }
.clock { width: 156px; display: flex; flex-direction: column; text-align: right; color: #fff; font-size: 23.500px; line-height: 32px; letter-spacing: -.4px; }
```
